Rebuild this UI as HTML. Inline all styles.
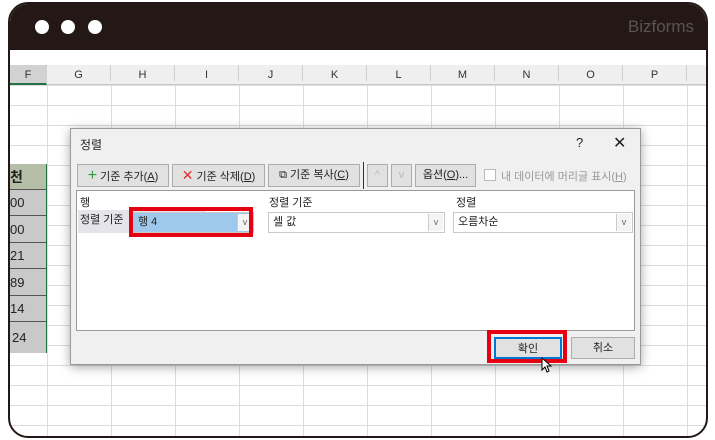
<!DOCTYPE html>
<html><head><meta charset="utf-8"><style>
*{margin:0;padding:0;box-sizing:border-box}
body{width:715px;height:440px;background:#fff;position:relative;overflow:hidden;font-family:"Liberation Sans","Noto Sans CJK KR",sans-serif;font-size:11px;color:#222}
.frame{position:absolute;left:8px;top:2px;width:700px;height:436px;border:2px solid #231815;border-radius:20px;overflow:hidden;background:#fff}
.top{position:absolute;left:0;top:0;right:0;height:46px;background:#231815}
.dot{position:absolute;top:16px;width:14px;height:14px;border-radius:50%;background:#fff}
.brand{position:absolute;right:12px;top:13px;color:#5a5452;font-size:17px}
.abs{position:absolute}
.grid{position:absolute;left:0;top:81px;right:0;bottom:0;
background-image:linear-gradient(#dcdcdc 1px,transparent 1px),linear-gradient(90deg,#dcdcdc 1px,transparent 1px);
background-size:100% 20px,64px 100%;background-position:0 0,37px 0}
.colh{position:absolute;left:0;top:61px;right:0;height:20px;background:#efefef;border-bottom:1px solid #c8c8c8}
.colh span{position:absolute;top:4px;width:64px;text-align:center;font-size:11px;color:#333;border-right:1px solid #d0d0d0;height:16px;top:0;line-height:20px}
.cell{position:absolute;left:0;width:36px;height:26px;background:#c9c9c9;border-bottom:1px solid #555;font-size:13px;line-height:26px;color:#222}
.dlg{position:absolute;left:70px;top:128px;width:571px;height:237px;background:#f0f0f0;border:1px solid #999;box-shadow:0 2px 10px rgba(0,0,0,.35)}
.btn{position:absolute;top:35px;height:23px;background:#e1e1e1;border:1px solid #adadad;font-size:11px;line-height:21px;text-align:center;color:#222}
.combo{position:absolute;top:83px;height:21px;background:#fff;border:1px solid #c8c8c8;font-size:11px;line-height:19px;padding-left:4px}
.combo i{position:absolute;right:1px;top:1px;width:15px;height:17px;border-left:1px solid #ccc;background:#f4f4f4;font-style:normal;text-align:center;font-size:9px;color:#666;line-height:17px}
.red{position:absolute;border:4px solid #e50012}
</style></head><body>
<div class="frame">
<div class="top"><div class="dot" style="left:25px"></div><div class="dot" style="left:51px"></div><div class="dot" style="left:78px"></div><div class="brand">Bizforms</div></div>
<div class="colh">
<span style="left:0;width:37px;background:#d2d2d2;border-bottom:2px solid #217346;height:20px">F</span>
<span style="left:37px">G</span><span style="left:101px">H</span><span style="left:165px">I</span><span style="left:229px">J</span><span style="left:293px">K</span><span style="left:357px">L</span><span style="left:421px">M</span><span style="left:485px">N</span><span style="left:549px">O</span><span style="left:613px">P</span>
</div>
<div class="grid"></div>
<div class="abs" style="left:0;top:160px;width:37px;height:189px;border-right:1px solid #217346;border-bottom:1px solid #217346;background:#c9c9c9">
<div class="cell" style="top:0;background:#b5bfa8;font-size:14px;font-weight:bold">천</div>
<div class="cell" style="top:26px">00</div>
<div class="cell" style="top:53px">00</div>
<div class="cell" style="top:79px">21</div>
<div class="cell" style="top:106px">89</div>
<div class="cell" style="top:132px">14</div>
<div class="cell" style="top:159px;border:none;padding-left:2px;height:30px;line-height:30px"> 24</div>
</div>
</div>
<div class="dlg">
<div class="abs" style="left:9px;top:7px;font-size:12px">정렬</div>
<div class="abs" style="left:505px;top:6px;font-size:13px">?</div>
<div class="abs" style="left:542px;top:4px;font-size:16px">✕</div>
<div class="btn" style="left:6px;width:92px"><span style="color:#2e9a3a;font-size:16px">+</span> 기준 추가(<u>A</u>)</div>
<div class="btn" style="left:101px;width:93px"><span style="color:#e03030;font-size:14px">✕</span> 기준 삭제(<u>D</u>)</div>
<div class="btn" style="left:197px;width:92px">⧉ 기준 복사(<u>C</u>)</div>
<div class="abs" style="left:292px;top:33px;width:1px;height:27px;background:#333"></div>
<div class="btn" style="left:296px;width:21px;color:#bbb">^</div>
<div class="btn" style="left:320px;width:21px;color:#bbb">v</div>
<div class="btn" style="left:344px;width:61px">옵션(<u>O</u>)...</div>
<div class="abs" style="left:413px;top:40px;width:12px;height:12px;border:1px solid #bbb;background:#fff"></div>
<div class="abs" style="left:430px;top:39px;color:#999">내 데이터에 머리글 표시(<u>H</u>)</div>
<div class="abs" style="left:5px;top:61px;width:559px;height:141px;background:#fff;border:1px solid #999">
<div class="abs" style="left:3px;top:3px">행</div>
<div class="abs" style="left:192px;top:3px">정렬 기준</div>
<div class="abs" style="left:379px;top:3px">정렬</div>
<div class="abs" style="left:1px;top:19px;width:128px;height:23px;background:#e4e4ea"></div>
<div class="abs" style="left:3px;top:20px">정렬 기준</div>
</div>
<div class="combo" style="left:62px;width:121px;background:#9fc9ec"> 행 4<i>v</i></div>
<div class="combo" style="left:197px;width:177px">셀 값<i>v</i></div>
<div class="combo" style="left:382px;width:180px">오름차순<i>v</i></div>
<div class="btn" style="left:423px;top:208px;width:68px;height:22px;border:2px solid #0078d7">확인</div>
<div class="btn" style="left:500px;top:208px;width:64px;height:22px">취소</div>
</div>
<div class="red" style="left:129px;top:207px;width:124px;height:30px"></div>
<div class="red" style="left:487px;top:330px;width:80px;height:33px"></div>
<svg class="abs" style="left:541px;top:357px" width="12" height="17" viewBox="0 0 12 17"><path d="M1 1 L1 13 L4 10 L6 15 L8 14 L6 9 L10 9 Z" fill="#fff" stroke="#000" stroke-width="1"/></svg>
</body></html>
